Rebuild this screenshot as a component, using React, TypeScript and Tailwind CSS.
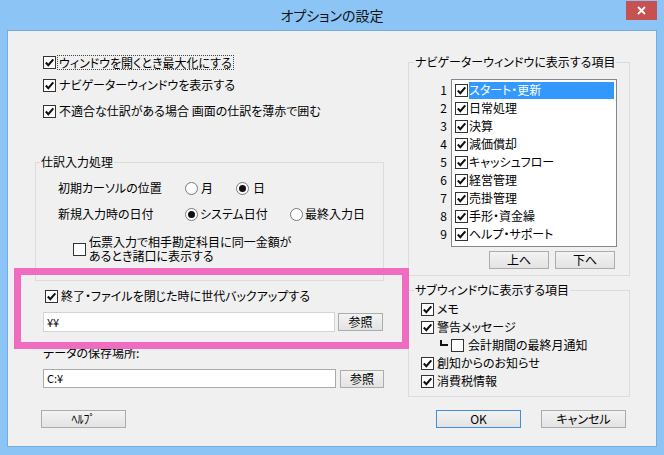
import React from 'react';

const Check = ({ checked }: { checked: boolean }) => (
  <span className="flex h-[13px] w-[13px] shrink-0 items-center justify-center border border-[#333333] bg-white">
    {checked && (
      <svg width="11" height="11" viewBox="0 0 11 11">
        <path d="M1.8 5.6 L4.3 8.2 L9.3 2.4" fill="none" stroke="#111" strokeWidth="2.1" />
      </svg>
    )}
  </span>
);

const Radio = ({ checked }: { checked: boolean }) => (
  <span className="flex h-[13px] w-[13px] shrink-0 items-center justify-center rounded-full border border-[#7a7a7a] bg-white">
    {checked && <span className="h-[7px] w-[7px] rounded-full bg-[#111111]" />}
  </span>
);

const Btn = ({ children, className = '', def = false }: { children: React.ReactNode; className?: string; def?: boolean }) => (
  <button
    className={`flex h-[18px] items-center justify-center border bg-linear-to-b from-[#f3f3f3] to-[#e3e3e3] text-[12px] leading-none text-black ${
      def ? 'border-[#3c8fd8]' : 'border-[#acacac]'
    } ${className}`}
  >
    {children}
  </button>
);

const navItems = ['スタート・更新', '日常処理', '決算', '減価償却', 'キャッシュフロー', '経営管理', '売掛管理', '手形・資金繰', 'ヘルプ・サポート'];

export default function App() {
  return (
    <div className="relative flex h-[455px] w-[664px] flex-col overflow-hidden bg-[#8bc4f5] font-['Noto_Sans_CJK_JP',sans-serif] text-[12px] text-black [font-feature-settings:'palt']">
      {/* title bar */}
      <div className="grid h-[30px] grid-cols-[1fr_auto_1fr] items-start">
        <div />
        <div className="mt-[6px] text-[14px] leading-[18px] text-[#111]">オプションの設定</div>
        <div className="flex justify-end pr-[7px] pt-[1px]">
          <div className="flex h-[19px] w-[31px] items-center justify-center bg-[#c75050]">
            <svg width="9" height="9" viewBox="0 0 9 9">
              <path d="M1 1 L8 8 M8 1 L1 8" stroke="#fff" strokeWidth="1.8" />
            </svg>
          </div>
        </div>
      </div>

      {/* client */}
      <div className="mx-[7px] flex h-[417px] border border-[#78abdc] bg-[#f0f0f0]">
        {/* left column */}
        <div className="ml-[27px] flex w-[349px] flex-col">
          <div className="mt-[22px] flex h-[18px] items-center pl-[8px]">
            <Check checked />
            <span className="ml-[2px] px-[1px] leading-[13px] outline-1 outline-dotted outline-[#444]">ウィンドウを開くとき最大化にする</span>
          </div>
          <div className="mt-[5px] flex h-[18px] items-center gap-[3px] pl-[8px]">
            <Check checked />
            <span>ナビゲーターウィンドウを表示する</span>
          </div>
          <div className="mt-[8px] flex h-[18px] items-center gap-[3px] pl-[8px]">
            <Check checked />
            <span>不適合な仕訳がある場合 画面の仕訳を薄赤で囲む</span>
          </div>

          <fieldset className="mt-[35px] border border-[#dcdcdc]">
            <legend className="ml-[4px] px-[1px] leading-[14px]">仕訳入力処理</legend>
            <div className="pb-[17px] pl-[22px] pt-[10px]">
              <div className="flex h-[18px] items-center">
                <span className="w-[127px]">初期カーソルの位置</span>
                <span className="flex w-[51px] items-center gap-[3px]">
                  <Radio checked={false} />月
                </span>
                <span className="flex items-center gap-[4px]">
                  <Radio checked />日
                </span>
              </div>
              <div className="mt-[8px] flex h-[18px] items-center">
                <span className="w-[127px]">新規入力時の日付</span>
                <span className="flex w-[105px] items-center gap-[2px]">
                  <Radio checked />システム日付
                </span>
                <span className="flex items-center gap-[2px]">
                  <Radio checked={false} />最終入力日
                </span>
              </div>
              <div className="mt-[12px] flex items-center gap-[3px] pl-[15px]">
                <span className="mt-[1px] flex h-[13px] w-[13px] border border-[#333333] bg-white" />
                <span className="leading-[14px]">
                  伝票入力で相手勘定科目に同一金額が
                  <br />
                  あるとき諸口に表示する
                </span>
              </div>
            </div>
          </fieldset>

          <div className="mt-[6px] flex h-[18px] items-center gap-[3px] pl-[10px]">
            <Check checked />
            <span>終了・ファイルを閉じた時に世代バックアップする</span>
          </div>
          <div className="mt-[7px] flex h-[20px] items-center pl-[8px]">
            <div className="flex h-[20px] w-[292px] items-center border border-[#d4d4d4] bg-white pl-[3px] text-[11px]">¥¥</div>
            <Btn className="ml-[3px] w-[45px]">参照</Btn>
          </div>
          <div className="mt-[12px] flex h-[18px] items-center pl-[8px]">データの保存場所:</div>
          <div className="mt-[7px] flex h-[19px] items-center pl-[8px]">
            <div className="flex h-[19px] w-[293px] items-center border border-[#ababab] bg-white pl-[3px] text-[11px]">C:¥</div>
            <Btn className="ml-[4px] w-[44px]">参照</Btn>
          </div>
          <div className="mt-[22px] pl-[6px]">
            <Btn className="w-[85px] text-[11px]">ﾍﾙﾌﾟ</Btn>
          </div>
        </div>

        {/* right column */}
        <div className="ml-[24px] flex w-[222px] flex-col">
          <fieldset className="mt-[24px] border border-[#dcdcdc]">
            <legend className="ml-[5px] px-[1px] leading-[14px]">ナビゲーターウィンドウに表示する項目</legend>
            <div className="pb-[6px] pt-[10px]">
              <div className="flex">
                <div className="ml-[26px] w-[14px] pt-[2px] text-right">
                  {navItems.map((_, i) => (
                    <div key={i} className="flex h-[18px] items-center justify-end pr-[2px] text-[12px]">
                      {i + 1}
                    </div>
                  ))}
                </div>
                <div className="ml-[2px] h-[168px] w-[166px] border border-[#828790] bg-white pt-[1px]">
                  {navItems.map((name, i) => (
                    <div key={name} className="flex h-[18px] items-center pl-[3px] pr-[2px]">
                      <Check checked />
                      <span className={`ml-[1px] flex h-[17px] flex-1 items-center ${i === 0 ? 'bg-[#3399ff] text-white' : ''}`}>{name}</span>
                    </div>
                  ))}
                </div>
              </div>
              <div className="mt-[4px] flex gap-[6px] pl-[80px]">
                <Btn className="w-[60px]">上へ</Btn>
                <Btn className="w-[60px]">下へ</Btn>
              </div>
            </div>
          </fieldset>

          <fieldset className="mt-[7px] border border-[#dcdcdc]">
            <legend className="ml-[5px] px-[1px] leading-[14px]">サブウィンドウに表示する項目</legend>
            <div className="pb-[6px] pl-[12px] pt-[3px]">
              <div className="flex h-[18px] items-center gap-[3px]">
                <Check checked />メモ
              </div>
              <div className="flex h-[18px] items-center gap-[3px]">
                <Check checked />警告メッセージ
              </div>
              <div className="flex h-[18px] items-center pl-[19px]">
                <span className="mb-[4px] h-[6px] w-[8px] border-b-2 border-l-2 border-[#111]" />
                <span className="ml-[3px]">
                  <Check checked={false} />
                </span>
                <span className="ml-[4px]">会計期間の最終月通知</span>
              </div>
              <div className="flex h-[18px] items-center gap-[3px]">
                <Check checked />創知からのお知らせ
              </div>
              <div className="flex h-[18px] items-center gap-[3px]">
                <Check checked />消費税情報
              </div>
            </div>
          </fieldset>

          <div className="mt-[13px] flex gap-[20px] pl-[28px]">
            <Btn def className="w-[85px]">OK</Btn>
            <Btn className="w-[85px]">キャンセル</Btn>
          </div>
        </div>
      </div>

      {/* pink highlight annotation */}
      <div className="pointer-events-none absolute left-[14px] top-[268px] h-[81px] w-[395px] border-[7px] border-[#ef6cc0]" />
    </div>
  );
}
